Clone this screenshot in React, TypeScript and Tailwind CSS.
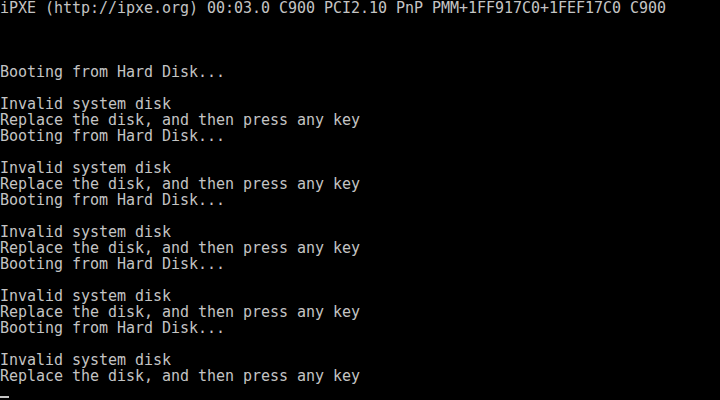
export default function App() {
  const rows: string[] = [
    "iPXE (http://ipxe.org) 00:03.0 C900 PCI2.10 PnP PMM+1FF917C0+1FEF17C0 C900",
    "",
    "",
    "",
    "Booting from Hard Disk...",
    "",
    "Invalid system disk",
    "Replace the disk, and then press any key",
    "Booting from Hard Disk...",
    "",
    "Invalid system disk",
    "Replace the disk, and then press any key",
    "Booting from Hard Disk...",
    "",
    "Invalid system disk",
    "Replace the disk, and then press any key",
    "Booting from Hard Disk...",
    "",
    "Invalid system disk",
    "Replace the disk, and then press any key",
    "Booting from Hard Disk...",
    "",
    "Invalid system disk",
    "Replace the disk, and then press any key",
  ];
  return (
    <div className="w-[720px] h-[400px] bg-black overflow-hidden text-[#c4c4c4] font-['DejaVu_Sans_Mono',monospace] text-[15px] leading-[16px] tracking-[-0.03px]">
      {rows.map((r, i) => (
        <div key={i} className="h-[16px] whitespace-pre">
          {r}
        </div>
      ))}
      <div className="h-[16px] flex flex-col justify-end pb-[2px]">
        <div className="w-[9px] h-[2px] bg-[#c4c4c4]" />
      </div>
    </div>
  );
}
